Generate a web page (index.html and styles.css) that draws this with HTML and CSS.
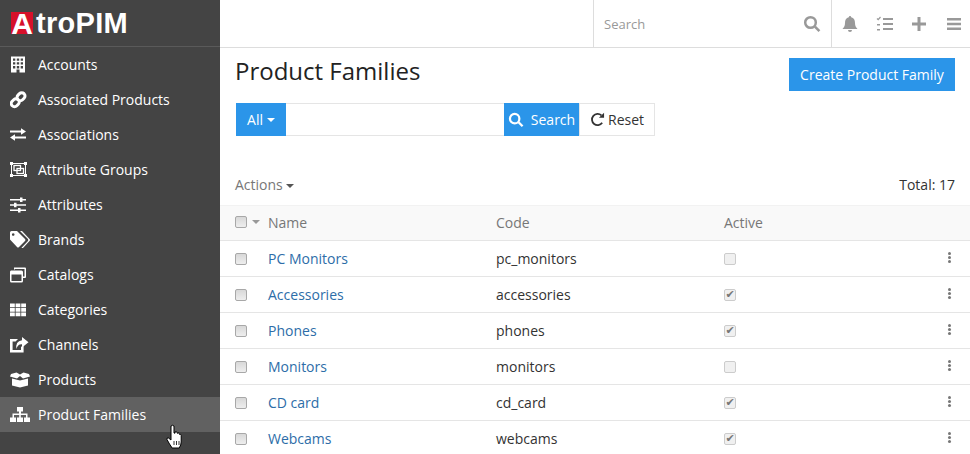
FILE: index.html
```html
<!DOCTYPE html>
<html lang="en">
<head>
<meta charset="utf-8">
<title>Product Families</title>
<link rel="stylesheet" href="styles.css">
</head>
<body>
<div class="app">
  <aside class="sidebar">
    <div class="logo"><span class="logo-a">A</span><span class="logo-rest">troPIM</span></div>
    <nav class="nav">
      <a class="nav-item"><svg class="nav-icon" viewBox="0 0 20 18"><path fill-rule="evenodd" d="M1 .5h14v16H9.500v-3h-3v3H1zM3 2.500v2.300h2.300V2.500zm3.800 0v2.300h2.400V2.500zm3.900 0v2.300H13V2.500zM3 6.300v2.300h2.300V6.300zm3.800 0v2.300h2.400V6.300zm3.900 0v2.300H13V6.300zM3 10.100v2.300h2.300v-2.300zm3.800 0v2.300h2.400v-2.300zm3.900 0v2.300H13v-2.300z"/></svg><span>Accounts</span></a>
      <a class="nav-item"><svg class="nav-icon" viewBox="0 0 20 18"><g fill="none" stroke="#fff" stroke-width="3"><rect x="1" y="8.500" width="8.500" height="6.500" rx="3.200" transform="rotate(-45 5.250 11.750)"/><rect x="6.800" y="2.500" width="8.500" height="6.500" rx="3.200" transform="rotate(-45 11 5.750)"/></g></svg><span>Associated Products</span></a>
      <a class="nav-item"><svg class="nav-icon" viewBox="0 0 20 18"><path d="M0 4h11V1.800l5 3.200-5 3.200V6H0zM16 10H5V7.800L0 11l5 3.200V12h11z" transform="translate(0 .5)"/></svg><span>Associations</span></a>
      <a class="nav-item"><svg class="nav-icon" viewBox="0 0 20 18"><g fill="none" stroke="#fff"><rect x="1.500" y="2.500" width="14" height="12"/><rect x="4" y="4.500" width="6.500" height="5" stroke-width="1.300"/><rect x="7" y="7.500" width="6.500" height="5" stroke-width="1.300"/></g><path d="M0 1h3v3H0zM14 1h3v3h-3zM0 13h3v3H0zM14 13h3v3h-3z"/></svg><span>Attribute Groups</span></a>
      <a class="nav-item"><svg class="nav-icon" viewBox="0 0 20 18"><path d="M0 3h16v1.600H0zM0 8.200h16v1.600H0zM0 13.400h16V15H0zM10 1.500h2.500v4.500H10zM4 6.700h2.500v4.500H4zM8 11.900h2.500v4.500H8z"/></svg><span>Attributes</span></a>
      <a class="nav-item"><svg class="nav-icon" viewBox="0 0 20 18"><path fill-rule="evenodd" d="M0 1.500Q0 0 1.500 0H7l8 8q1 1 0 2l-6 6q-1 1-2 0L0 8.500zM3.200 2.200a1.300 1.300 0 1 0 .01 0z"/><path d="M10 0h2l7.500 8q1 1 0 2l-6 6.500q-1 1-2 .3l6-6.300q1.500-1.500 0-3z"/></svg><span>Brands</span></a>
      <a class="nav-item"><svg class="nav-icon" viewBox="0 0 20 18"><path fill-rule="evenodd" d="M4 1.500h11q1 0 1 1V11q0 1-1 1h-2v-1.500h1.500V3h-10v1H4zM1 4.500h10.500q1.500 0 1.500 1.500v9q0 1.500-1.500 1.500H1.500Q0 16.500 0 15V6q0-1.500 1-1.500zM1.500 8.500V15h10V8.500z"/></svg><span>Catalogs</span></a>
      <a class="nav-item"><svg class="nav-icon" viewBox="0 0 20 18"><path d="M0 2.500h4.800v3.700H0zM5.600 2.500h4.800v3.700H5.600zM11.200 2.500H16v3.700h-4.800zM0 7h4.800v3.700H0zM5.600 7h4.800v3.700H5.600zM11.200 7H16v3.700h-4.800zM0 11.500h4.800v3.700H0zM5.600 11.500h4.800v3.700H5.600zM11.200 11.500H16v3.700h-4.800z"/></svg><span>Categories</span></a>
      <a class="nav-item"><svg class="nav-icon" viewBox="0 0 20 18"><path d="M0 3h8L5.500 5.500H2.600v8.400H11V11l2.600-2v7.500H0z"/><path d="M12 1l6.500 5.200L12 11.500V8.300Q7.500 8 6.500 13 5 5.500 12 4.200z"/></svg><span>Channels</span></a>
      <a class="nav-item"><svg class="nav-icon" viewBox="0 0 20 18"><path d="M2 7.500l8 2 8-2v7l-8 2-8-2zM1 3l5.500-1.500L10 3.500l3.500-2L19 3l1 2.500-7 2-3-2.500-3 2.500-7-2z"/></svg><span>Products</span></a>
      <a class="nav-item nav-item-active"><svg class="nav-icon" viewBox="0 0 20 18"><path d="M7 1h6v4.500h-2v2h6.500v4H20V16h-6v-4.500h2V9H10.800v2.500H13V16H7v-4.500h2.200V9H4v2.500h2V16H0v-4.500h2.500v-4H9v-2H7z"/></svg><span>Product Families</span></a>
    </nav>
  </aside>
  <div class="content">
    <header class="topbar">
      <div class="global-search">
        <span class="global-search-label">Search</span>
        <svg class="top-icon top-icon-search" viewBox="0 0 18 18"><circle cx="7.500" cy="7.500" r="5.300" fill="none" stroke="#999" stroke-width="2.500"/><path d="M11 12.500l1.800-1.800 4.500 4.500-1.800 1.800z" fill="#999"/></svg>
      </div>
      <div class="top-actions">
        <svg class="top-icon" viewBox="0 0 16 18"><path fill="#999" d="M8 1a1.200 1.200 0 0 1 1.200 1.200C12 3 13 5 13 8c0 3 1 4.500 2.500 6H.5C2 12.500 3 11 3 8c0-3 1-5 3.800-5.800A1.200 1.200 0 0 1 8 1zM6 15h4a2 2 0 0 1-4 0z"/></svg>
        <svg class="top-icon" viewBox="0 0 18 18"><path fill="#999" d="M7 3h10v2H7zM7 8h10v2H7zM7 13h10v2H7zM1 14h3v1.500H1zM1 9h3v1.500H1z"/><path fill="none" stroke="#999" stroke-width="1.200" d="M1 3.500l1.200 1.200L4.500 2"/></svg>
        <svg class="top-icon" viewBox="0 0 18 18"><path fill="#999" d="M7.500 2h3v5.500H16v3h-5.500V16h-3v-5.500H2v-3h5.500z"/></svg>
        <svg class="top-icon" viewBox="0 0 18 18"><path fill="#999" d="M2 3h14v2.400H2zM2 7.800h14v2.400H2zM2 12.600h14V15H2z"/></svg>
      </div>
    </header>
    <main class="main">
      <div class="title-row">
        <h1 class="title">Product Families</h1>
        <a class="btn-primary btn-create">Create Product Family</a>
      </div>
      <div class="search-row">
        <a class="btn-primary btn-all">All<i class="caret"></i></a>
        <div class="search-input"></div>
        <a class="btn-primary btn-search"><svg class="btn-icon" viewBox="0 0 18 18"><circle cx="7.500" cy="7.500" r="5.300" fill="none" stroke="#fff" stroke-width="2.500"/><path d="M11 12.500l1.800-1.800 4.500 4.500-1.800 1.800z" fill="#fff"/></svg>Search</a>
        <a class="btn-reset"><svg class="btn-icon-reset" viewBox="0 0 16 16"><path fill="none" stroke="#333" stroke-width="1.900" d="M13 11.500A6 6 0 1 1 12.200 3.600"/><path fill="#333" d="M9.500 6H15V.8z"/></svg>Reset</a>
      </div>
      <div class="list-tools">
        <span class="actions">Actions<i class="caret caret-dark"></i></span>
        <span class="total">Total: 17</span>
      </div>
      <div class="table">
        <div class="row row-head">
          <div class="cell-check"><i class="check"></i><i class="caret caret-light"></i></div>
          <div class="cell-name">Name</div>
          <div class="cell-code">Code</div>
          <div class="cell-active">Active</div>
        </div>
        <div class="row">
          <div class="cell-check"><i class="check"></i></div>
          <a class="cell-name link">PC Monitors</a>
          <div class="cell-code">pc_monitors</div>
          <div class="cell-active"><i class="check check-off"></i></div>
          <div class="cell-menu"><i class="dots"></i></div>
        </div>
        <div class="row">
          <div class="cell-check"><i class="check"></i></div>
          <a class="cell-name link">Accessories</a>
          <div class="cell-code">accessories</div>
          <div class="cell-active"><i class="check check-off">✔</i></div>
          <div class="cell-menu"><i class="dots"></i></div>
        </div>
        <div class="row">
          <div class="cell-check"><i class="check"></i></div>
          <a class="cell-name link">Phones</a>
          <div class="cell-code">phones</div>
          <div class="cell-active"><i class="check check-off">✔</i></div>
          <div class="cell-menu"><i class="dots"></i></div>
        </div>
        <div class="row">
          <div class="cell-check"><i class="check"></i></div>
          <a class="cell-name link">Monitors</a>
          <div class="cell-code">monitors</div>
          <div class="cell-active"><i class="check check-off"></i></div>
          <div class="cell-menu"><i class="dots"></i></div>
        </div>
        <div class="row">
          <div class="cell-check"><i class="check"></i></div>
          <a class="cell-name link">CD card</a>
          <div class="cell-code">cd_card</div>
          <div class="cell-active"><i class="check check-off">✔</i></div>
          <div class="cell-menu"><i class="dots"></i></div>
        </div>
        <div class="row">
          <div class="cell-check"><i class="check"></i></div>
          <a class="cell-name link">Webcams</a>
          <div class="cell-code">webcams</div>
          <div class="cell-active"><i class="check check-off">✔</i></div>
          <div class="cell-menu"><i class="dots"></i></div>
        </div>
      </div>
    </main>
  </div>
  <svg class="cursor" viewBox="0 0 16 26"><path fill="#fff" stroke="#000" stroke-width="1" d="M5 2q1.500-1.500 3 0v7l1 .2V8q1.200-1 2 .3l.3 1q1.200-.8 2 .3l.2.8q1.500-.5 1.700 1.100V18q0 3-2 6H6q-1-2-2.500-4L1 15.500q-.5-2 1.500-1.500L5 16z"/><path stroke="#000" stroke-width=".8" d="M8 17v4M10.500 17v4M13 17v4"/></svg>
</div>
</body>
</html>
```
FILE: styles.css
```css
* { box-sizing: border-box; }
html, body { margin: 0; padding: 0; }
body {
  width: 970px;
  height: 454px;
  overflow: hidden;
  font-family: "Open Sans", sans-serif;
  font-size: 14px;
  color: #333;
  background: #fff;
}
.app { display: flex; position: relative; width: 970px; height: 454px; overflow: hidden; }

.sidebar { width: 220px; flex: none; background: #444; color: #fff; }
.logo {
  display: flex;
  align-items: center;
  height: 47px;
  padding: 0 0 1px 11px;
  border-bottom: 1px solid #5a5a5a;
  font-family: "Liberation Sans", sans-serif;
  font-weight: 700;
  font-size: 29px;
  line-height: 22px;
}
.logo-a {
  display: flex;
  justify-content: center;
  width: 22px;
  height: 22px;
  background: #d6102a;
  color: #fff;
  line-height: 24px;
  font-size: 30px;
}
.logo-rest { margin-left: 3px; letter-spacing: 0.3px; }
.nav { display: flex; flex-direction: column; }
.nav-item { display: flex; align-items: center; height: 35px; padding-left: 10px; color: #fff; }
.nav-item-active { background: #616161; }
.nav-icon { width: 20px; height: 18px; margin-right: 8px; flex: none; fill: #fff; }

.content { flex: 1; min-width: 0; }
.topbar {
  display: flex;
  justify-content: flex-end;
  height: 48px;
  border-bottom: 1px solid #ddd;
}
.global-search {
  display: flex;
  align-items: center;
  justify-content: space-between;
  width: 239px;
  padding: 0 10px 0 10px;
  border-left: 1px solid #ddd;
  border-right: 1px solid #ddd;
  color: #999;
  font-size: 13px;
}
.top-actions { display: flex; align-items: center; gap: 16.500px; width: 138px; padding-left: 9px; }
.top-icon { width: 18px; height: 18px; flex: none; }

.main { padding: 0 15px; }
.title-row { display: flex; justify-content: space-between; align-items: flex-start; height: 55px; padding-top: 10px; }
.title { margin: -1px 0 0; font-size: 24px; font-weight: 400; line-height: 27px; color: #222; }
.btn-primary {
  display: flex;
  align-items: center;
  justify-content: center;
  background: #2b95e9;
  color: #fff;
}
.btn-create { width: 166px; height: 33px; }
.search-row { display: flex; height: 33px; margin-left: 1px; }
.btn-all { width: 50px; }
.search-input { width: 218px; border: 1px solid #e5e5e5; border-left: 0; border-right: 0; }
.btn-search { width: 75px; }
.btn-icon { width: 16px; height: 16px; margin-right: 7px; flex: none; }
.btn-reset {
  display: flex;
  align-items: center;
  justify-content: center;
  width: 76px;
  border: 1px solid #e5e5e5;
  color: #333;
}
.btn-icon-reset { width: 15px; height: 15px; margin-right: 3px; flex: none; }
.caret {
  display: inline-block;
  width: 0;
  height: 0;
  margin-left: 4px;
  border-left: 4px solid transparent;
  border-right: 4px solid transparent;
  border-top: 4px solid #fff;
  vertical-align: middle;
}
.caret-dark { border-top-color: #555; margin-left: 3px; }
.caret-light { border-top-color: #999; margin-left: 5px; }
.list-tools {
  display: flex;
  justify-content: space-between;
  align-items: center;
  height: 69px;
  padding: 27px 0 0;
}
.actions { color: #777; }
.total { color: #333; }
.table { margin: 0 -15px; }
.row {
  display: flex;
  align-items: center;
  height: 36px;
  padding-left: 15px;
  border-bottom: 1px solid #e5e5e5;
}
.row-head { background: #f9f9f9; color: #777; border-top: 1px solid #f2f2f2; padding-bottom: 2px; }
.cell-check { display: flex; align-items: center; width: 33px; flex: none; }
.cell-name { width: 228px; flex: none; }
.cell-code { width: 228px; flex: none; }
.cell-active { flex: 1; display: flex; align-items: center; }
.cell-menu { width: 22px; flex: none; display: flex; }
.link { color: #2d6da8; }
.check {
  display: block;
  width: 12px;
  height: 12px;
  border: 1px solid #a8a8a8;
  border-radius: 2px;
  background: linear-gradient(#d8d8d8, #eeeeee);
}
.check-off {
  border-color: #ccc;
  background: #f0f0f0;
  font-style: normal;
  font-size: 11px;
  line-height: 10px;
  text-align: center;
  color: #777;
  font-family: "DejaVu Sans", sans-serif;
}
.dots {
  display: block;
  width: 3px;
  height: 3px;
  border-radius: 50%;
  background: #777;
  box-shadow: 0 4px 0 #777, 0 8px 0 #777;
  margin-top: -7px;
}
.cursor { position: absolute; left: 166px; top: 424px; width: 16px; height: 26px; }
```
